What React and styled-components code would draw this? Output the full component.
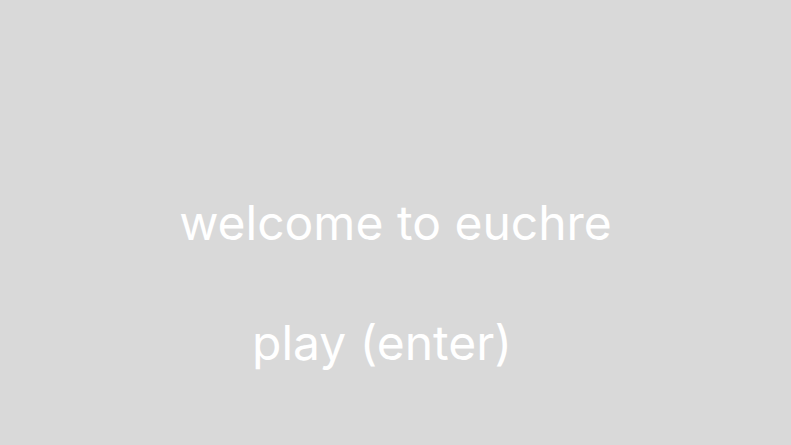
import React from 'react';
import styled, { createGlobalStyle } from 'styled-components';

const GlobalStyle = createGlobalStyle`
  html, body {
    margin: 0;
    padding: 0;
    background: #d9d9d9;
  }
`;

const Screen = styled.main`
  width: 100vw;
  height: 100vh;
  background: #d9d9d9;
  display: flex;
  flex-direction: column;
  align-items: center;
  padding-top: 190px;
  box-sizing: border-box;
  font-family: Inter, 'Noto Sans', sans-serif;
  color: #ffffff;
`;

const Title = styled.h1`
  margin: 0;
  font-size: 48px;
  font-weight: 400;
  line-height: 66px;
`;

const PlayButton = styled.button`
  margin-top: 54px;
  margin-right: 27px;
  padding: 0;
  border: none;
  background: none;
  color: inherit;
  font-family: inherit;
  font-size: 48px;
  font-weight: 400;
  line-height: 66px;
  cursor: pointer;
`;

export default function App() {
  return (
    <>
      <GlobalStyle />
      <Screen>
        <Title>welcome to euchre</Title>
        <PlayButton>play (enter)</PlayButton>
      </Screen>
    </>
  );
}
